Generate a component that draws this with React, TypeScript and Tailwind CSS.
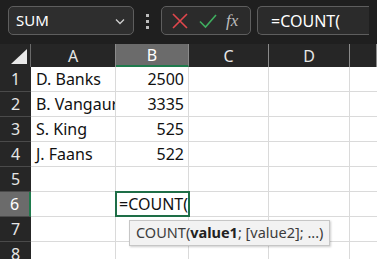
import React from 'react';

const COLS = ['A', 'B', 'C', 'D', ''];
const ROWS: [string, string][] = [
  ['D. Banks', '2500'],
  ['B. Vangaurd', '3335'],
  ['S. King', '525'],
  ['J. Faans', '522'],
  ['', ''],
  ['', ''],
  ['', ''],
  ['', ''],
];

const FONT = { fontFamily: '"Noto Sans", "Open Sans", sans-serif' };

const Toolbar = () => (
  <div className="flex h-[44px] items-start bg-[#1f1f1f] px-2 pt-[6px]">
    <div className="flex h-[29px] w-[126px] items-center justify-between rounded-[5px] border border-[#5e5e5e] bg-[#2e2e2e] pl-[7px] pr-[6px] text-[15px] text-white">
      <span>SUM</span>
      <svg width="14" height="14" viewBox="0 0 14 14" fill="none" stroke="#cfcfcf" strokeWidth="1.3">
        <path d="M3 5.5 L7 9.5 L11 5.5" />
      </svg>
    </div>
    <div className="flex w-[27px] flex-col items-center gap-[3px] pt-[8px]">
      <span className="h-[3px] w-[3px] bg-[#bdbdbd]" />
      <span className="h-[3px] w-[3px] bg-[#bdbdbd]" />
      <span className="h-[3px] w-[3px] bg-[#bdbdbd]" />
    </div>
    <div className="flex h-[29px] w-[90px] items-center rounded-[5px] border border-[#5e5e5e] bg-[#2b2b2b] pl-[9px]">
      <svg width="18" height="18" viewBox="0 0 18 18" fill="none" stroke="#e0474c" strokeWidth="1.6">
        <path d="M2 2 L16 16 M16 2 L2 16" />
      </svg>
      <svg className="ml-[9px]" width="20" height="18" viewBox="0 0 20 18" fill="none" stroke="#3fae5f" strokeWidth="1.6">
        <path d="M2 9.5 L7.5 15 L18 3" />
      </svg>
      <span className="ml-[8px] text-[17px] italic text-[#bdbdbd]" style={{ fontFamily: '"Liberation Serif", serif' }}>fx</span>
    </div>
    <div className="ml-[6px] flex h-[29px] flex-1 items-center rounded-l-[5px] border border-r-0 border-[#5e5e5e] bg-[#2b2b2b] pl-[13px] text-[16px] text-white">
      =COUNT(
    </div>
  </div>
);

const App = () => (
  <div className="h-[259px] w-[377px] overflow-hidden bg-white" style={FONT}>
    <Toolbar />
    <div className="grid grid-cols-[31px_85px_73px_80px_81px_1fr] grid-rows-[23px_repeat(8,25px)]">
      <div className="relative bg-[#262626] border-r border-[#6a6a6a]">
        <svg className="absolute bottom-[3px] right-[3px]" width="16" height="15" viewBox="0 0 16 15">
          <path d="M16 0 L16 15 L0 15 Z" fill="#e8e8e8" />
        </svg>
      </div>
      {COLS.map((c, i) => (
        <div
          key={c + i}
          className={
            i === 1
              ? 'flex items-center justify-center border-b-2 border-r border-[#1f7a4c] border-r-[#8a8a8a] bg-[#6b6b6b] pt-[1px] text-[16px] text-white'
              : 'flex items-center justify-center border-r border-[#8a8a8a] bg-[#262626] text-[16px] text-[#e6e6e6]'
          }
        >
          {c}
        </div>
      ))}
      {ROWS.map(([a, b], r) => (
        <React.Fragment key={r}>
          <div
            className={
              r === 5
                ? 'flex items-center justify-center border-b border-r-2 border-[#4a4a4a] border-r-[#1f7a4c] bg-[#6b6b6b] text-[16px] text-white'
                : 'flex items-center justify-center border-b border-[#4a4a4a] bg-[#262626] text-[16px] text-[#e6e6e6]'
            }
          >
            {r + 1}
          </div>
          <div className="flex items-center overflow-hidden whitespace-nowrap border-b border-r border-[#dadada] pl-[5px] text-[16px] text-[#111]">
            {a}
          </div>
          {r === 5 ? (
            <div className="relative z-10 -ml-px -mt-px flex h-[26px] w-[75px] items-center overflow-visible whitespace-nowrap border-2 border-[#1e6e47] pl-[2px] text-[16px] text-[#111]">
              =COUNT(
              <span className="inline-block h-[20px] w-[2px] bg-black" />
            </div>
          ) : (
            <div className="flex items-center justify-end border-b border-r border-[#dadada] pr-[4px] text-[16px] text-[#111]">
              {b}
            </div>
          )}
          <div className="border-b border-r border-[#dadada]" />
          <div className="border-b border-r border-[#dadada]" />
          <div className="border-b border-[#dadada]" />
        </React.Fragment>
      ))}
    </div>
    <div className="absolute left-[129px] top-[220px] z-20 flex h-[26px] items-center border border-[#c6c6c6] bg-[#f2f2f2] px-[6px] text-[14.5px] text-[#3c3c3c] shadow-[1px_1px_2px_rgba(0,0,0,0.2)]" style={FONT}>
      COUNT(<b className="font-bold text-[#222]">value1</b>; [value2]; ...)
    </div>
  </div>
);

export default App;
